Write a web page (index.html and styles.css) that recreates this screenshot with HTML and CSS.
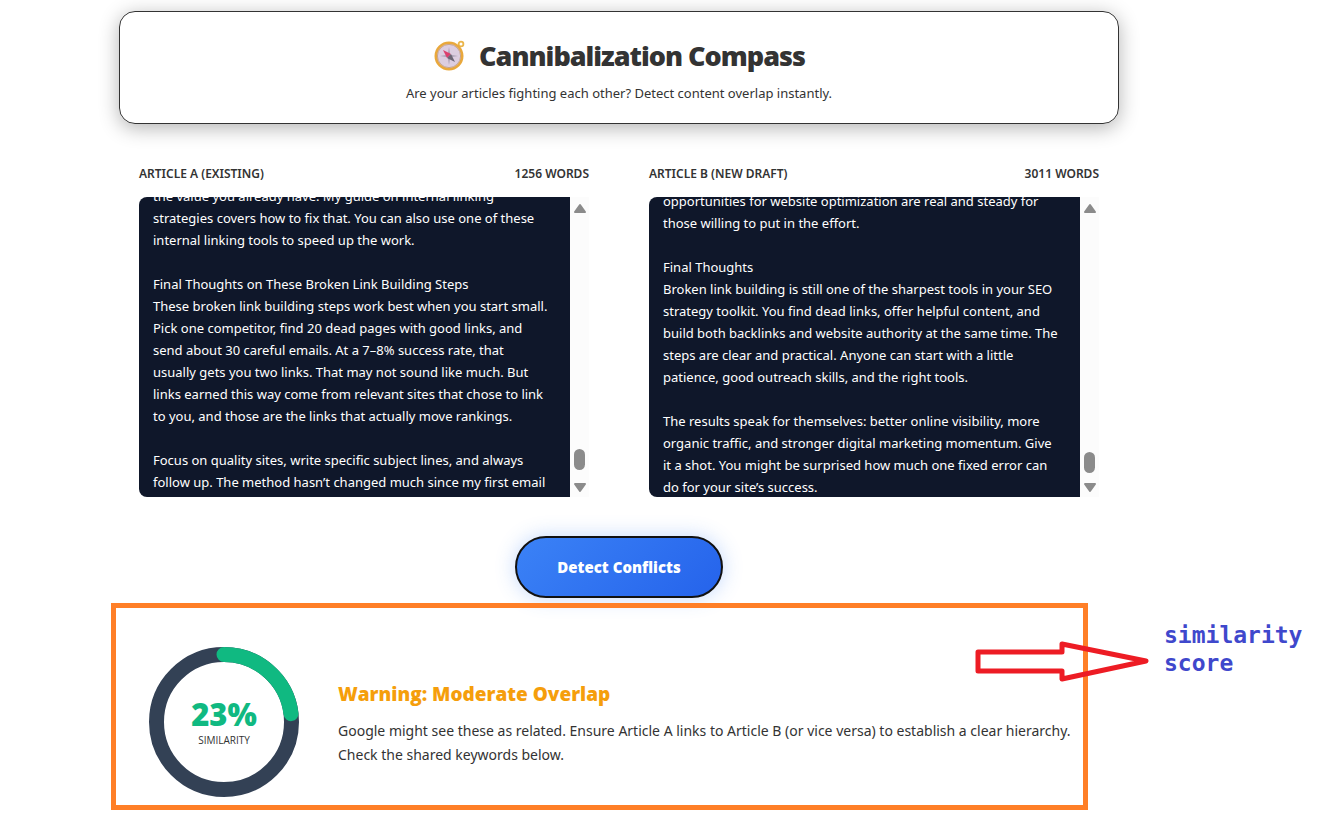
FILE: index.html
```html
<!DOCTYPE html>
<html lang="en">
<head>
    <meta charset="UTF-8">
    <meta name="viewport" content="width=device-width, initial-scale=1.0">
    <title>Cannibalization Compass</title>
    <link rel="stylesheet" href="styles.css">
</head>
<body>
    <div class="container">
        <header class="hero">
            <h1>
                <svg class="compass" viewBox="0 0 32 32" aria-hidden="true">
                    <circle cx="28" cy="4" r="2.4" fill="none" stroke="#eab54a" stroke-width="1.8"/>
                    <circle cx="16" cy="16" r="13.2" fill="#dccde0" stroke="#e9a83c" stroke-width="2.6"/>
                    <circle cx="16" cy="16" r="11.6" fill="none" stroke="#b98a5c" stroke-width="0.6"/>
                    <path d="M16 7l1.2 7.8L25 16l-7.800 1.200L16 25l-1.200-7.800L7 16l7.800-1.200z" fill="#aaa0b4"/>
                    <path d="M10 10l8 4-4 4z" fill="#dc3f6e"/>
                    <path d="M22 22l-8-4 4-4z" fill="#6c6574"/>
                </svg>
                <span>Cannibalization Compass</span>
            </h1>
            <p>Are your articles fighting each other? Detect content overlap instantly.</p>
        </header>

        <form id="compare-form">
            <div class="articles">
                <div class="article">
                    <div class="article-head">
                        <label for="article-a">ARTICLE A (EXISTING)</label>
                        <span>1256 WORDS</span>
                    </div>
                    <div class="editor">
                        <textarea id="article-a" wrap="off" data-scroll="26">
the value you already have. My guide on internal linking
strategies covers how to fix that. You can also use one of these
internal linking tools to speed up the work.

Final Thoughts on These Broken Link Building Steps
These broken link building steps work best when you start small.
Pick one competitor, find 20 dead pages with good links, and
send about 30 careful emails. At a 7–8% success rate, that
usually gets you two links. That may not sound like much. But
links earned this way come from relevant sites that chose to link
to you, and those are the links that actually move rankings.

Focus on quality sites, write specific subject lines, and always
follow up. The method hasn’t changed much since my first email</textarea>
                        <div class="scrollbar" aria-hidden="true">
                            <svg viewBox="0 0 14 11"><path d="M7 2L12 9H2z"/></svg>
                            <div class="thumb thumb-a"></div>
                            <svg viewBox="0 0 14 11"><path d="M2 2h10L7 9z"/></svg>
                        </div>
                    </div>
                </div>

                <div class="article">
                    <div class="article-head">
                        <label for="article-b">ARTICLE B (NEW DRAFT)</label>
                        <span>3011 WORDS</span>
                    </div>
                    <div class="editor">
                        <textarea id="article-b" wrap="off" data-scroll="21">
opportunities for website optimization are real and steady for
those willing to put in the effort.

Final Thoughts
Broken link building is still one of the sharpest tools in your SEO
strategy toolkit. You find dead links, offer helpful content, and
build both backlinks and website authority at the same time. The
steps are clear and practical. Anyone can start with a little
patience, good outreach skills, and the right tools.

The results speak for themselves: better online visibility, more
organic traffic, and stronger digital marketing momentum. Give
it a shot. You might be surprised how much one fixed error can
do for your site’s success.</textarea>
                        <div class="scrollbar" aria-hidden="true">
                            <svg viewBox="0 0 14 11"><path d="M7 2L12 9H2z"/></svg>
                            <div class="thumb thumb-b"></div>
                            <svg viewBox="0 0 14 11"><path d="M2 2h10L7 9z"/></svg>
                        </div>
                    </div>
                </div>
            </div>

            <button type="submit" id="detect">Detect Conflicts</button>
        </form>

        <section class="result">
            <div class="ring">
                <svg viewBox="0 0 150 150" aria-hidden="true">
                    <circle class="ring-track" cx="75" cy="75" r="67.5"/>
                    <circle class="ring-value" cx="75" cy="75" r="67.5" pathLength="100"/>
                </svg>
                <div class="ring-text">
                    <strong>23%</strong>
                    <span>SIMILARITY</span>
                </div>
            </div>
            <div class="verdict">
                <h2>Warning: Moderate Overlap</h2>
                <p>Google might see these as related. Ensure Article A links to Article B (or vice versa) to establish a clear hierarchy. Check the shared keywords below.</p>
            </div>
            <div class="note">
                <svg viewBox="0 0 174 42" aria-hidden="true">
                    <path d="M3 11H87V3L171 20L87 38V30H3z"/>
                </svg>
                <span>similarity score</span>
            </div>
        </section>
    </div>

    <script>
        document.querySelectorAll("textarea").forEach(function (box) {
            box.scrollTop = Number(box.dataset.scroll);
        });

        document.getElementById("compare-form").addEventListener("submit", function (event) {
            event.preventDefault();
        });
    </script>
</body>
</html>
```
FILE: styles.css
```css
* {
    box-sizing: border-box;
}

body {
    font-family: "Noto Sans", "Open Sans", sans-serif;
    margin: 0;
    background-color: #ffffff;
    color: #333333;
}

.container {
    max-width: 1000px;
    margin: 11px 0 0 119px;
}

.hero {
    padding: 24px 20px 19px;
    border: 1px solid #333333;
    border-radius: 16px;
    box-shadow: 0 4px 20px rgba(0, 0, 0, 0.3);
    text-align: center;
}

h1 {
    display: flex;
    justify-content: center;
    align-items: center;
    gap: 14px;
    margin: 0 0 6px;
    font-family: "Open Sans", sans-serif;
    font-size: 27px;
    font-weight: 800;
    line-height: 40px;
    letter-spacing: -1px;
}

.compass {
    width: 32px;
    height: 32px;
}

.hero p {
    margin: 0;
    font-size: 13px;
    line-height: 22px;
}

.articles {
    display: grid;
    grid-template-columns: 1fr 1fr;
    gap: 60px;
    padding: 40px 20px 0;
}

.article-head {
    display: flex;
    justify-content: space-between;
    margin-bottom: 14px;
    font-size: 12px;
    font-weight: 600;
    line-height: 19px;
}

.editor {
    display: flex;
    height: 300px;
}

textarea {
    flex: 1;
    min-width: 0;
    padding: 14px;
    border: none;
    border-radius: 8px 0 0 8px;
    background-color: #0f172a;
    color: #ffffff;
    font-family: inherit;
    font-size: 13px;
    line-height: 22px;
    resize: none;
    overflow: hidden;
}

.scrollbar {
    display: flex;
    flex-direction: column;
    align-items: center;
    width: 19px;
    padding: 6px 0 4px;
    background-color: #fcfcfc;
}

.scrollbar svg {
    width: 14px;
    height: 11px;
    fill: #8b8b8b;
    stroke: #8b8b8b;
    stroke-width: 2px;
    stroke-linejoin: round;
}

.thumb {
    width: 11px;
    height: 21px;
    margin-top: auto;
    border-radius: 6px;
    background-color: #8b8b8b;
}

.thumb-a {
    margin-bottom: 12px;
}

.thumb-b {
    margin-bottom: 9px;
}

#detect {
    display: block;
    width: 208px;
    height: 62px;
    margin: 39px auto 5px;
    border: 2px solid #111111;
    border-radius: 31px;
    background: linear-gradient(135deg, #3b82f6, #2563eb);
    box-shadow: 0 0 20px rgba(59, 130, 246, 0.3);
    color: #ffffff;
    font-family: "Open Sans", sans-serif;
    font-size: 15px;
    font-weight: 800;
    cursor: pointer;
}

.result {
    position: relative;
    display: flex;
    align-items: center;
    gap: 39px;
    margin: 0 31px 0 -8px;
    padding: 39px 0 8px 33px;
    border: 5px solid #ff7f27;
}

.ring {
    display: grid;
    flex: none;
    width: 150px;
}

.ring > * {
    grid-area: 1 / 1;
}

.ring svg {
    display: block;
    transform: rotate(-90deg);
}

.ring circle {
    fill: none;
    stroke-width: 15px;
}

.ring-track {
    stroke: #334155;
}

.ring-value {
    stroke: #10b981;
    stroke-linecap: round;
    stroke-dasharray: 23 100;
}

.ring-text {
    display: flex;
    flex-direction: column;
    justify-content: center;
    align-items: center;
    font-family: "Open Sans", sans-serif;
}

.ring-text strong {
    color: #10b981;
    font-size: 31px;
    font-weight: 800;
    line-height: 36px;
}

.ring-text span {
    font-size: 10px;
    line-height: 16px;
}

.verdict {
    padding-top: 4px;
}

.verdict h2 {
    margin: 0 0 12px;
    color: #f59e0b;
    font-family: "Open Sans", sans-serif;
    font-size: 19px;
    font-weight: 800;
    line-height: 26px;
}

.verdict p {
    margin: 0;
    font-size: 14px;
    line-height: 24px;
}

/* callout that points out of the result box */
.note {
    position: absolute;
    top: 13px;
    left: 859px;
    display: flex;
    gap: 15px;
    width: 350px;
}

.note svg {
    flex: none;
    width: 174px;
    height: 42px;
    margin-top: 20px;
    fill: none;
    stroke: #ed1c24;
    stroke-width: 5px;
    stroke-linejoin: round;
}

.note span {
    color: #3f48cc;
    font-family: "DejaVu Sans Mono", monospace;
    font-size: 23px;
    font-weight: 700;
    line-height: 28px;
}
```
